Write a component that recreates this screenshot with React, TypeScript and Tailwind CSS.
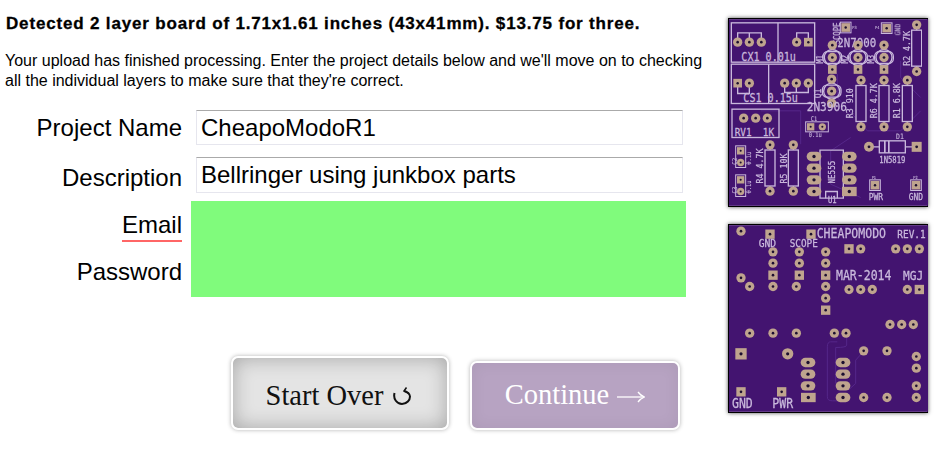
import React from 'react';

const SILK = '#c9b8dc';
const PAD = '#bfa48e';
const HOLE = '#1c0f30';
const TRACE = '#55278a';

type Pt = [number, number];

const Round = ({ at, r = 14 }: { at: Pt; r?: number }) => (
  <g>
    <circle cx={at[0]} cy={at[1]} r={r} fill={PAD} />
    <circle cx={at[0]} cy={at[1]} r={r * 0.28} fill={HOLE} />
  </g>
);

const Square = ({ at, r = 14, ring = false }: { at: Pt; r?: number; ring?: boolean }) => (
  <g>
    {ring && <rect x={at[0] - r - 3} y={at[1] - r - 3} width={r * 2 + 6} height={r * 2 + 6} fill="none" stroke={SILK} strokeWidth="3" />}
    <rect x={at[0] - r} y={at[1] - r} width={r * 2} height={r * 2} fill={PAD} />
    <circle cx={at[0]} cy={at[1]} r={r * 0.28} fill={HOLE} />
  </g>
);

const Oval = ({ at }: { at: Pt }) => (
  <g>
    <rect x={at[0] - 22} y={at[1] - 14} width={44} height={28} rx={14} fill={PAD} />
    <circle cx={at[0]} cy={at[1]} r={5} fill={HOLE} />
  </g>
);

// silkscreen text: tall and narrow like the gerber font
const Silk = ({ x, y, size = 26, width, rotate, children }: { x: number; y: number; size?: number; width?: number; rotate?: number; children: string }) => (
  <text
    x={x}
    y={y}
    fill={SILK}
    stroke={SILK}
    strokeWidth={size > 18 ? 0.8 : 0.3}
    fontSize={size * 1.25}
    fontFamily="'DejaVu Sans Mono', monospace"
    textLength={width ?? children.length * size * 0.65}
    lengthAdjust="spacingAndGlyphs"
    transform={rotate ? `rotate(${rotate} ${x} ${y})` : undefined}
  >
    {children}
  </text>
);

const Resistor = ({ x, top, bottom, h = 108 }: { x: number; top: number; bottom: number; h?: number }) => {
  const mid = (top + bottom) / 2;
  return (
    <g>
      <line x1={x} x2={x} y1={top} y2={bottom} stroke={SILK} strokeWidth="4" />
      <rect x={x - 15} y={mid - h / 2} width={30} height={h} fill="#431470" stroke={SILK} strokeWidth="4" />
      <Round at={[x, top]} />
      <Round at={[x, bottom]} />
    </g>
  );
};

const Transistor = ({ x, y }: { x: number; y: number }) => (
  <g>
    <circle cx={x} cy={y} r={24} fill="none" stroke={SILK} strokeWidth="4" />
    <rect x={x - 28} y={y - 18} width={56} height={36} rx={14} fill="none" stroke={SILK} strokeWidth="4" />
    <circle cx={x} cy={y} r={14} fill={PAD} />
    <circle cx={x} cy={y} r={4} fill={HOLE} />
  </g>
);

const TopBoard = () => (
  <svg viewBox="25 25 597 560" className="block h-[187px] w-[199px] blur-[0.5px]">
    <rect x="25" y="25" width="597" height="560" fill="#431470" />
    <g fill="none" stroke={TRACE} strokeWidth="3">
      <path d="M285 130 L350 190 L350 260 L440 360 L540 360 L600 300" />
      <path d="M390 380 L330 420 L330 520 L420 560" />
      <path d="M540 150 L540 200 L600 260" />
      <path d="M120 300 L240 300 L240 400" />
    </g>
    <g fill="none" stroke={SILK} strokeWidth="4">
      <rect x="32" y="36" width="250" height="118" />
      <line x1="172" y1="36" x2="172" y2="154" />
      <rect x="32" y="160" width="250" height="118" />
      <line x1="144" y1="160" x2="144" y2="278" />
      <rect x="34" y="295" width="141" height="85" />
      <path d="M51 94 V66 H122 V94 M86 66 V94" />
      <path d="M228 94 V66 H263 V94" />
      <path d="M51 217 V248 H86 V217" />
      <path d="M192 217 V245 H263 V217 M227 217 V245" />
    </g>
    <Round at={[51, 94]} />
    <Round at={[86, 94]} />
    <Round at={[122, 94]} />
    <Round at={[228, 94]} />
    <Square at={[263, 94]} r={13} />
    <Square at={[51, 217]} r={13} />
    <Round at={[86, 217]} />
    <Round at={[192, 217]} />
    <Round at={[227, 217]} />
    <Round at={[263, 217]} />
    <Round at={[69, 322]} />
    <Round at={[105, 322]} />
    <Round at={[140, 322]} />
    <Silk x={62} y={150} size={28}>CX1 0.01u</Silk>
    <Silk x={68} y={274} size={28}>CS1 0.15u</Silk>
    <Silk x={42} y={376} size={26}>{'RV1\u00a0\u00a01K'}</Silk>

    <Square at={[375, 50]} r={13} ring />
    <Square at={[498, 52]} r={13} ring />
    <Silk x={358} y={100} size={20} rotate={-90}>SCOPE</Silk>
    <Silk x={538} y={74} size={18} rotate={-90}>GND</Silk>
    <Silk x={395} y={56} size={10}>P3</Silk>
    <Silk x={463} y={54} size={10}>P4</Silk>
    <Silk x={350} y={108} size={30}>2N7000</Silk>

    {[335, 412, 490].map((x) => (
      <g key={x}>
        <Transistor x={x} y={140} />
        <Round at={[x, 103]} />
        <Square at={[x, 176]} r={13} />
      </g>
    ))}
    <Silk x={306} y={158} size={20} rotate={-90}>M1</Silk>
    <Silk x={383} y={158} size={20} rotate={-90}>M2</Silk>
    <Silk x={460} y={158} size={20} rotate={-90}>M3</Silk>

    <Transistor x={333} y={241} />
    <Round at={[333, 205]} />
    <Round at={[333, 277]} />
    <Silk x={302} y={262} size={22} rotate={-90}>Q1</Silk>
    <Silk x={258} y={301} size={31}>2N3906</Silk>

    <Resistor x={588} top={42} bottom={182} />
    <Silk x={568} y={165} size={23} rotate={-90}>R2 4.7K</Silk>
    <Resistor x={421} top={208} bottom={348} />
    <Silk x={398} y={322} size={23} rotate={-90}>R3 910</Silk>
    <Resistor x={490} top={208} bottom={348} />
    <Silk x={470} y={322} size={23} rotate={-90}>R6 4.7K</Silk>
    <Resistor x={560} top={208} bottom={348} />
    <Silk x={538} y={322} size={23} rotate={-90}>R1 6.8K</Silk>
    <Resistor x={148} top={402} bottom={541} />
    <Silk x={128} y={518} size={23} rotate={-90}>R4 4.7K</Silk>
    <Resistor x={218} top={402} bottom={541} />
    <Silk x={198} y={518} size={23} rotate={-90}>R5 10K</Silk>

    <rect x="255" y="333" width="68" height="30" fill="none" stroke={SILK} strokeWidth="3" />
    <Square at={[270, 348]} r={11} />
    <Round at={[305, 348]} r={11} />
    <Silk x={270} y={330} size={15}>C1</Silk>
    <Silk x={264} y={380} size={15}>0.1u</Silk>

    {[[60, 420, 455], [60, 507, 542]].map(([x, a, b]) => (
      <g key={a}>
        <rect x={x - 15} y={a - 15} width={30} height={b - a + 30} fill="none" stroke={SILK} strokeWidth="3" />
        <Square at={[x, a]} r={11} />
        <Round at={[x, b]} r={11} />
      </g>
    ))}
    <Silk x={49} y={462} size={16} rotate={-90}>C2</Silk>
    <Silk x={49} y={548} size={16} rotate={-90}>C3</Silk>
    <Silk x={90} y={462} size={15} rotate={-90}>0.1u</Silk>
    <Silk x={90} y={548} size={15} rotate={-90}>0.1u</Silk>

    <path d="M298 418 H368 V562 H298 Z" fill="none" stroke={SILK} strokeWidth="4" />
    <path d="M315 562 V542 H350 V562" fill="none" stroke={SILK} strokeWidth="4" />
    {[437, 472, 507, 542].map((y, i) => (
      <g key={y}>
        <Oval at={[280, y]} />
        {i === 3 ? (
          <g>
            <rect x="364" y={y - 14} width="44" height="28" fill={PAD} />
            <circle cx="386" cy={y} r="5" fill={HOLE} />
          </g>
        ) : (
          <Oval at={[386, y]} />
        )}
      </g>
    ))}
    <Silk x={344} y={518} size={21} rotate={-90}>NE555</Silk>
    <Silk x={322} y={578} size={20}>U1</Silk>

    <line x1="445" y1="408" x2="588" y2="408" stroke={SILK} strokeWidth="4" />
    <rect x="476" y="390" width="78" height="36" fill="#431470" stroke={SILK} strokeWidth="4" />
    <rect x="490" y="390" width="5" height="36" fill={SILK} />
    <rect x="502" y="390" width="5" height="36" fill={SILK} />
    <Round at={[445, 408]} r={15} />
    <Square at={[588, 408]} r={15} />
    <Silk x={526} y={384} size={18}>D1</Silk>
    <Silk x={476} y={456} size={20}>1N5819</Silk>

    <Square at={[463, 523]} r={13} ring />
    <Square at={[586, 523]} r={13} ring />
    <Silk x={453} y={504} size={10}>P1</Silk>
    <Silk x={578} y={504} size={10}>P2</Silk>
    <Silk x={444} y={567} size={22}>PWR</Silk>
    <Silk x={564} y={567} size={22}>GND</Silk>
  </svg>
);

const BottomBoard = () => (
  <svg viewBox="25 25 597 560" className="block h-[187px] w-[199px] blur-[0.5px]">
    <rect x="25" y="25" width="597" height="560" fill="#431470" />
    <g fill="none" stroke={TRACE} strokeWidth="3">
      <path d="M350 375 H330 Q320 375 320 390 V540 Q320 552 335 552 H368" />
      <path d="M378 350 V385 Q378 392 345 392 V500" />
      <path d="M430 402 L405 430 V500 L385 518 H368" />
    </g>
    {[[61, 43], [61, 183], [87, 209], [87, 349], [157, 349], [227, 349], [157, 105], [157, 139], [157, 209], [236, 105], [236, 139], [227, 209], [315, 105], [315, 139], [315, 209], [315, 244], [420, 96], [525, 96], [560, 96], [596, 96], [385, 218], [420, 218], [455, 218], [560, 218], [508, 323], [543, 323], [578, 323], [341, 349], [376, 349], [429, 402], [499, 402], [587, 419], [587, 454], [587, 507], [587, 542], [429, 542], [499, 542]].map((p) => (
      <Round key={p.join('-')} at={p as Pt} />
    ))}
    {[[148, 52], [271, 52], [157, 175], [236, 175], [315, 175], [315, 280], [385, 96], [596, 218], [61, 525], [183, 525]].map((p) => (
      <Square key={p.join('-')} at={p as Pt} r={14} />
    ))}
    <Square at={[61, 411]} r={17} />
    <Round at={[201, 411]} r={17} />
    {[437, 472, 507].map((y) => (
      <g key={y}>
        <Oval at={[262, y]} />
        <Oval at={[367, y]} />
      </g>
    ))}
    <rect x="241" y="528" width="44" height="28" fill={PAD} />
    <circle cx="263" cy="542" r="5" fill={HOLE} />
    <Oval at={[367, 542]} />
    <Silk x={288} y={65} size={32}>CHEAPOMODO</Silk>
    <Silk x={530} y={65} size={24} width={85}>REV.1</Silk>
    <Silk x={346} y={190} size={32}>MAR-2014</Silk>
    <Silk x={547} y={190} size={31}>MGJ</Silk>
    <Silk x={114} y={92} size={27}>GND</Silk>
    <Silk x={207} y={92} size={26}>SCOPE</Silk>
    <Silk x={34} y={575} size={32}>GND</Silk>
    <Silk x={155} y={575} size={32}>PWR</Silk>
  </svg>
);

const BoardFrame = ({ children, className }: { children: React.ReactNode; className?: string }) => (
  <div className={`w-[200px] border border-black shadow-[0_0_4px_rgba(0,0,0,0.7)] ${className ?? ''}`}>{children}</div>
);

const App = () => {
  return (
    <div className="flex h-[451px] w-[938px] overflow-hidden bg-white font-['Liberation_Sans',Arial,sans-serif] text-black">
      <div className="w-[728px] shrink-0 pl-[6px] pt-[15px]">
        <h2 className="text-[17px] font-bold leading-[18px] tracking-[0.83px] [-webkit-text-stroke:0.3px_black]">
          Detected 2 layer board of 1.71x1.61 inches (43x41mm). $13.75 for three.
        </h2>
        <p className="-ml-px mt-[18px] w-[705px] text-[16px] leading-[20px]">
          Your upload has finished processing. Enter the project details below and we'll move on to checking all the
          individual layers to make sure that they're correct.
        </p>

        <div className="mt-[19px] flex items-center">
          <label className="w-[176px] text-right text-[24px] leading-[28px]">Project Name</label>
          <input
            defaultValue="CheapoModoR1"
            className="ml-[14px] h-[35px] w-[487px] border border-[#e6e6ee] border-t-[#aaaaaa] px-[4px] pt-[1px] text-[24px] outline-none"
          />
        </div>
        <div className="mt-[12px] flex items-center">
          <label className="w-[176px] pt-[6px] text-right text-[24px] leading-[28px]">Description</label>
          <input
            defaultValue="Bellringer using junkbox parts"
            className="ml-[14px] h-[36px] w-[487px] border border-[#e6e6ee] border-t-[#aaaaaa] px-[4px] text-[24px] outline-none"
          />
        </div>

        <div className="mt-[8px] flex h-[96px]">
          <div className="flex w-[176px] flex-col items-end text-[24px] leading-[28px]">
            <span className="mt-[10px] border-b-2 border-[#ff6666] pb-[1px]">Email</span>
            <span className="mt-[16px]">Password</span>
          </div>
          <div className="ml-[9px] w-[495px] bg-[#80fb7c]" />
        </div>

        <div className="ml-[225px] mt-[59px] flex items-end gap-[21px] font-['Liberation_Serif','Times_New_Roman',serif] text-[28.5px]">
          <button className="flex h-[74px] w-[218px] items-center justify-center gap-[10px] rounded-[7px] border-2 border-white bg-[#e4e4e4] pr-[3px] pt-[6px] text-[#111] shadow-[0_0_4px_rgba(0,0,0,0.3),inset_0_0_20px_rgba(0,0,0,0.28)]">
            Start Over
            <svg viewBox="0 0 18 18" className="h-[18px] w-[18px]" fill="none" stroke="#111" strokeWidth="2">
              <path d="M1.5 6 C0 12 4 17 9 17 C14 17 17 13 17 9.5 C17 7 14 4.5 11 4" />
              <path d="M13.5 0.5 L11 4 L16 6.5" strokeWidth="1.5" />
            </svg>
          </button>
          <button className="flex h-[69px] w-[210px] items-center justify-center gap-[8px] rounded-[7px] border-2 border-white bg-[#b7a3c2] text-white shadow-[0_0_4px_rgba(0,0,0,0.3),inset_0_0_16px_rgba(0,0,0,0.06)]">
            Continue
            <svg viewBox="0 0 28 12" className="mt-[3px] h-[12px] w-[28px]" fill="none" stroke="white" strokeWidth="1.3">
              <path d="M0 6 H27" />
              <path d="M21 1 Q23.5 4.5 27.5 6 Q23.5 7.5 21 11" />
            </svg>
          </button>
        </div>
      </div>

      <div className="flex-1 pt-[18px]">
        <BoardFrame>
          <TopBoard />
        </BoardFrame>
        <BoardFrame className="mt-[17px]">
          <BottomBoard />
        </BoardFrame>
      </div>
    </div>
  );
};

export default App;
